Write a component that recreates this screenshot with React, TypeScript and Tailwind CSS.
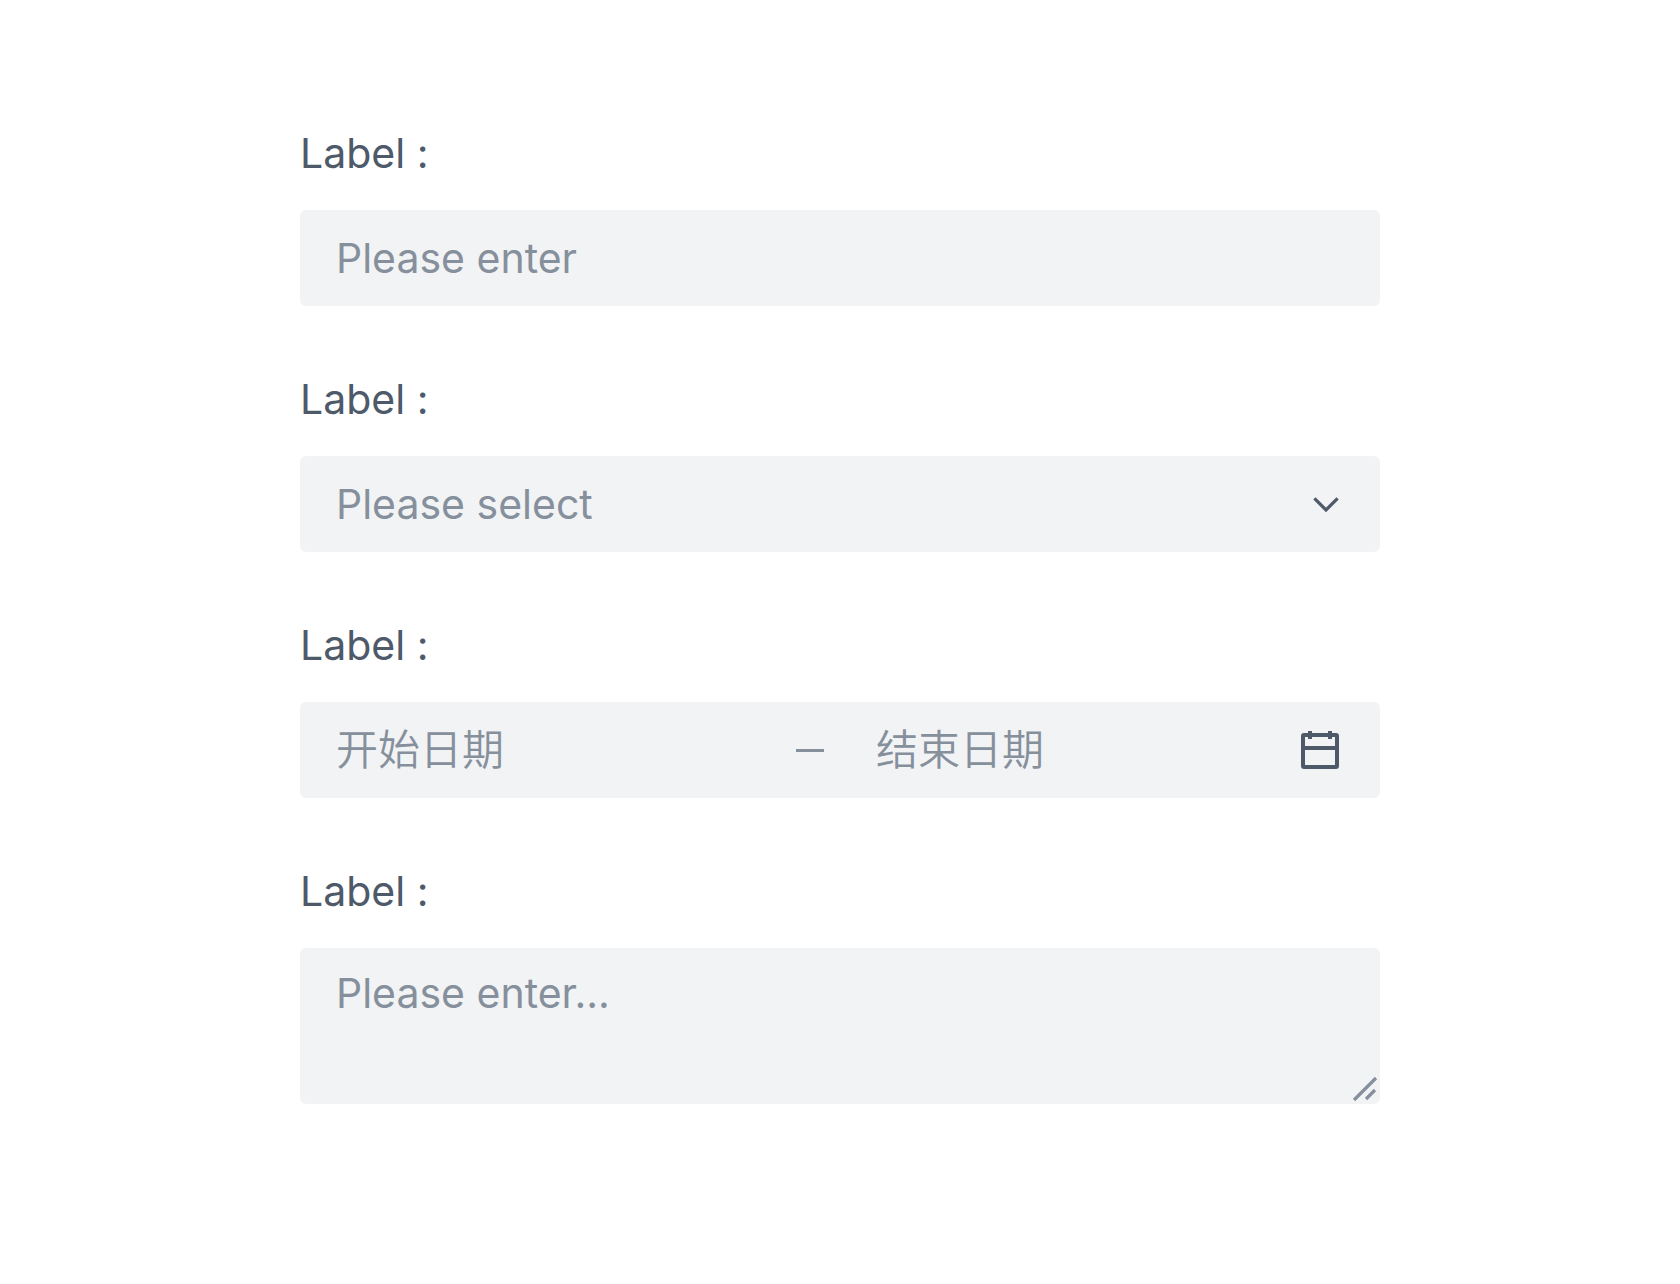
/**
 * Vertical form with an input, a select, a date range and a textarea
 */

import { useState } from 'react';
import type { ReactNode } from 'react';

interface FormItemProps {
  id: string;
  label: string;
  children: ReactNode;
}

const FormItem = ({ id, label, children }: FormItemProps) => {
  return (
    <div className="flex flex-col gap-6">
      <label htmlFor={id} className="text-[#4e5969]">
        {label}
      </label>
      {children}
    </div>
  );
};

const ChevronIcon = () => (
  <svg
    className="pointer-events-none absolute right-9 size-9 text-[#4e5969]"
    viewBox="0 0 36 36"
    fill="none"
    stroke="currentColor"
    strokeWidth="3.2"
    aria-hidden="true"
  >
    <path d="M6.4 12.4 18 24 29.6 12.4" />
  </svg>
);

const CalendarIcon = () => (
  <svg
    className="size-12 shrink-0 text-[#4e5969]"
    viewBox="0 0 48 48"
    fill="none"
    stroke="currentColor"
    strokeWidth="4"
    aria-hidden="true"
  >
    <path d="M7 22h34M14 5v8M34 5v8M8 41h32a1 1 0 0 0 1-1V10a1 1 0 0 0-1-1H8a1 1 0 0 0-1 1v30a1 1 0 0 0 1 1Z" />
  </svg>
);

const ResizeIcon = () => (
  <svg
    className="pointer-events-none absolute right-0 bottom-0 size-[30px] text-[#86909c]"
    viewBox="0 0 30 30"
    fill="none"
    stroke="currentColor"
    strokeWidth="3.2"
    aria-hidden="true"
  >
    <path d="M4 26 26 4M16 25l9-9" />
  </svg>
);

const App = () => {
  const [name, setName] = useState('');
  const [option, setOption] = useState('');
  const [startDate, setStartDate] = useState('');
  const [endDate, setEndDate] = useState('');
  const [notes, setNotes] = useState('');

  return (
    <main className="min-h-screen bg-white px-6 py-[120px] font-['Inter','Noto_Sans_CJK_SC',sans-serif] text-[41px] leading-[66px]">
      <form className="mx-auto flex w-full max-w-[1080px] flex-col gap-[60px]">
        <FormItem id="name" label="Label :">
          <input
            id="name"
            type="text"
            placeholder="Please enter"
            value={name}
            onChange={(e) => setName(e.target.value)}
            className="h-24 w-full rounded-md bg-[#f2f3f5] px-9 text-[#1d2129] outline-none placeholder:text-[#86909c]"
          />
        </FormItem>

        <FormItem id="option" label="Label :">
          <div className="relative flex items-center">
            <select
              id="option"
              value={option}
              onChange={(e) => setOption(e.target.value)}
              className="h-24 w-full appearance-none rounded-md bg-[#f2f3f5] px-9 text-[#86909c] outline-none"
            >
              <option value="">Please select</option>
            </select>
            <ChevronIcon />
          </div>
        </FormItem>

        <FormItem id="start-date" label="Label :">
          <div className="grid h-24 grid-cols-2 rounded-md bg-[#f2f3f5] text-[42px] font-[350]">
            <div className="flex items-center pr-4 pl-9">
              <input
                id="start-date"
                type="text"
                placeholder="开始日期"
                value={startDate}
                onChange={(e) => setStartDate(e.target.value)}
                className="w-full min-w-0 text-[#1d2129] outline-none placeholder:text-[#86909c]"
              />
              <span className="h-[3px] w-7 shrink-0 bg-[#86909c]" />
            </div>
            <div className="flex items-center px-9">
              <input
                type="text"
                aria-label="结束日期"
                placeholder="结束日期"
                value={endDate}
                onChange={(e) => setEndDate(e.target.value)}
                className="w-full min-w-0 text-[#1d2129] outline-none placeholder:text-[#86909c]"
              />
              <CalendarIcon />
            </div>
          </div>
        </FormItem>

        <FormItem id="notes" label="Label :">
          <div className="relative">
            <textarea
              id="notes"
              rows={2}
              placeholder="Please enter..."
              value={notes}
              onChange={(e) => setNotes(e.target.value)}
              className="block w-full resize-none rounded-md bg-[#f2f3f5] px-9 py-3 text-[#1d2129] outline-none placeholder:text-[#86909c]"
            />
            <ResizeIcon />
          </div>
        </FormItem>
      </form>
    </main>
  );
};

export default App;
